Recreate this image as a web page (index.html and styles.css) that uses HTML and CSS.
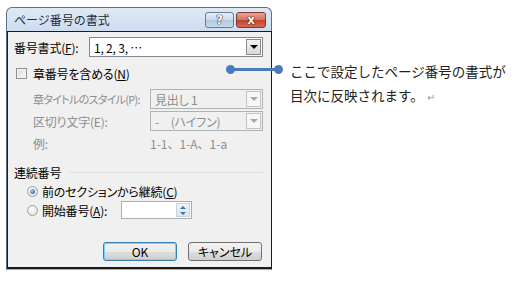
FILE: index.html
```html
<!DOCTYPE html>
<html lang="ja">
<head>
    <meta charset="UTF-8">
    <title>ページ番号の書式</title>
    <link rel="stylesheet" href="styles.css">
</head>
<body>
    <div class="page">
        <div class="dialog">
            <div class="titlebar">
                <span class="title">ページ番号の書式</span>
                <div class="caption-buttons">
                    <span class="cap-btn help">?</span>
                    <span class="cap-btn close">x</span>
                </div>
            </div>
            <div class="dialog-body">
                <div class="row first">
                    <span class="label wide">番号書式(<u>F</u>):</span>
                    <div class="combo">
                        <span class="combo-text">1, 2, 3, …</span>
                        <span class="drop"></span>
                    </div>
                </div>
                <div class="row check-row">
                    <span class="checkbox"></span>
                    <span>章番号を含める(<u>N</u>)</span>
                </div>
                <div class="row indent">
                    <span class="label muted sub squeeze">章タイトルのスタイル(P):</span>
                    <div class="combo disabled">
                        <span class="combo-text">見出し 1</span>
                        <span class="drop"></span>
                    </div>
                </div>
                <div class="row indent tight">
                    <span class="label muted sub">区切り文字(E):</span>
                    <div class="combo disabled">
                        <span class="combo-text">-　(ハイフン)</span>
                        <span class="drop"></span>
                    </div>
                </div>
                <div class="row indent tight">
                    <span class="label muted sub">例:</span>
                    <span class="muted sample">1-1、1-A、1-a</span>
                </div>

                <div class="group-head">
                    <span>連続番号</span>
                    <span class="group-line"></span>
                </div>
                <div class="radio-row">
                    <span class="radio checked"></span>
                    <span>前のセクションから継続(<u>C</u>)</span>
                </div>
                <div class="radio-row">
                    <span class="radio"></span>
                    <span class="start-label">開始番号(<u>A</u>):</span>
                    <div class="spin">
                        <span class="spin-arrows">
                            <span class="arr up"></span>
                            <span class="arr down"></span>
                        </span>
                    </div>
                </div>

                <div class="buttons">
                    <button class="btn default">OK</button>
                    <button class="btn">キャンセル</button>
                </div>
            </div>
        </div>

        <p class="note">ここで設定したページ番号の書式が<br>目次に反映されます。<span class="ret">↵</span></p>

        <!-- callout connector, drawn over the dialog edge -->
        <div class="connector">
            <span class="dot"></span>
            <span class="wire"></span>
            <span class="dot"></span>
        </div>
    </div>
</body>
</html>
```

FILE: styles.css
```css
body {
    margin: 0;
    background: #fff;
    font-family: "Noto Sans CJK JP", "Liberation Sans", sans-serif;
    font-size: 12px;
    color: #000;
}

.page {
    display: flex;
    align-items: flex-start;
    padding: 7px 0 0 6px;
    position: relative;
}

.dialog {
    width: 266px;
    height: 263px;
    box-sizing: border-box;
    display: flex;
    flex-direction: column;
    border: 1px solid #5b6f86;
    border-bottom-color: #7fb4e0;
    border-radius: 6px 6px 0 0;
    background: linear-gradient(#dfe9f5, #c7d8ec 30px, #c3d5eb);
    font-feature-settings: "palt";
    letter-spacing: -0.2px;
    white-space: nowrap;
}

.titlebar {
    height: 23px;
    display: flex;
    justify-content: space-between;
    align-items: center;
    padding: 0 5px 0 7px;
}

.title {
    font-size: 12px;
    color: #1e2a3a;
    font-feature-settings: normal;
    letter-spacing: 0;
}

.caption-buttons {
    display: flex;
    gap: 2px;
    align-self: flex-start;
    margin-top: 4px;
}

.cap-btn {
    height: 14px;
    border: 1px solid #6b7d93;
    border-radius: 3px;
    display: flex;
    align-items: center;
    justify-content: center;
    font-family: "DejaVu Sans", sans-serif;
    font-weight: bold;
    color: #fff;
    text-shadow: 0 0 1px #233, 0 0 1px #233, 0 0 1px #233;
}

.help {
    width: 27px;
    font-size: 12px;
    background: linear-gradient(#e6eef8, #c9d9ec 50%, #b3c8e2 51%, #c7d8ec);
}

.close {
    width: 28px;
    font-size: 12px;
    border-color: #7a3b33;
    background: linear-gradient(#e7a596, #d5705f 50%, #c1412d 51%, #d46a55);
    text-shadow: 0 0 1px #400, 0 0 1px #400, 0 0 1px #400;
}

.dialog-body {
    flex: 1;
    background: #f0f0f0;
    border: 1px solid #1c1c1c;
    border-bottom-width: 2px;
    margin: 0 -1px 0 0;
    padding: 5px 8px 0 6px;
}

.row {
    display: flex;
    align-items: center;
    height: 20px;
}

.check-row {
    margin-top: 6px;
    padding-left: 2px;
    gap: 6px;
}

.indent {
    margin-top: 6px;
    padding-left: 19px;
}

.indent.tight {
    margin-top: 2px;
}

.label.wide {
    width: 75px;
}

.label.sub {
    width: 117px;
    flex-shrink: 0;
}

.label.squeeze {
    font-size: 11px;
    letter-spacing: -0.7px;
}

.muted {
    color: #8d8d8d;
}

.sample {
    font-feature-settings: normal;
    letter-spacing: 0;
}

u {
    text-decoration-thickness: 1px;
    text-underline-offset: 1px;
}

.combo {
    flex: 1;
    height: 20px;
    box-sizing: border-box;
    display: flex;
    align-items: center;
    justify-content: space-between;
    background: #fff;
    border: 1px solid #828790;
    padding: 0 1px 0 4px;
}

.combo .drop {
    width: 15px;
    height: 16px;
    box-sizing: border-box;
    border: 1px solid #8b8b8b;
    background: linear-gradient(#f4f4f4, #d9d9d9);
    position: relative;
}

.combo .drop::after {
    content: "";
    position: absolute;
    left: 3px;
    top: 5px;
    border-left: 4px solid transparent;
    border-right: 4px solid transparent;
    border-top: 4px solid #000;
}

.combo.disabled {
    background: #f0f0f0;
    border-color: #adb2b5;
    color: #8d8d8d;
}

.combo.disabled .drop {
    border-color: #c4c4c4;
    background: #f7f7f7;
}

.combo.disabled .drop::after {
    border-top-color: #a8a8a8;
}

.checkbox {
    width: 11px;
    height: 11px;
    box-sizing: border-box;
    border: 1px solid #8e8f8f;
    background: linear-gradient(135deg, #dcdcdc, #f7f7f7);
    box-shadow: inset 0 0 0 1px #f4f4f4;
}

.group-head {
    display: flex;
    align-items: center;
    height: 20px;
    margin-top: 9px;
    gap: 8px;
}

.group-line {
    flex: 1;
    height: 1px;
    background: #d5dfe5;
}

.radio-row {
    display: flex;
    align-items: center;
    height: 18px;
    padding-left: 13px;
    gap: 4px;
}

.radio-row + .radio-row {
    margin-top: 1px;
}

.radio {
    width: 11px;
    height: 11px;
    box-sizing: border-box;
    border-radius: 50%;
    border: 1px solid #a0a0a0;
    background: radial-gradient(circle at 40% 40%, #fff, #d8d8d8);
    position: relative;
}

.radio.checked::after {
    content: "";
    position: absolute;
    left: 2px;
    top: 2px;
    width: 5px;
    height: 5px;
    border-radius: 50%;
    background: radial-gradient(circle at 35% 35%, #8fd0f5, #1a5f9c);
}

.start-label {
    width: 75px;
}

.spin {
    width: 71px;
    height: 18px;
    box-sizing: border-box;
    background: #fff;
    border: 1px solid #abadb3;
    display: flex;
    justify-content: flex-end;
    padding: 1px;
}

.spin-arrows {
    width: 14px;
    display: flex;
    flex-direction: column;
    align-items: center;
    justify-content: center;
    gap: 3px;
    background: linear-gradient(#eef3f9, #dbe6f1);
    border: 1px solid #c6d3e1;
    box-sizing: border-box;
}

.arr {
    border-left: 3px solid transparent;
    border-right: 3px solid transparent;
}

.arr.up {
    border-bottom: 3px solid #4a6f9c;
}

.arr.down {
    border-top: 3px solid #4a6f9c;
}

.buttons {
    display: flex;
    justify-content: flex-end;
    gap: 11px;
    margin-top: 23px;
    padding-right: 1px;
}

.btn {
    width: 74px;
    height: 19px;
    font-family: inherit;
    font-size: 12px;
    font-feature-settings: "palt";
    padding: 0;
    border: 1px solid #707070;
    border-radius: 3px;
    background: linear-gradient(#f2f2f2, #ebebeb 50%, #dddddd 51%, #cfcfcf);
    color: #000;
}

.btn.default {
    border-color: #3c7fb1;
    box-shadow: inset 0 0 0 1px #6ad6ff;
}

.note {
    margin: 52px 0 0 18px;
    font-size: 13.5px;
    line-height: 24px;
    color: #222;
    white-space: nowrap;
}

.ret {
    font-size: 10px;
    color: #999;
    margin-left: 3px;
}

.connector {
    position: absolute;
    left: 226px;
    top: 65px;
    display: flex;
    align-items: center;
}

.dot {
    width: 9px;
    height: 9px;
    border-radius: 50%;
    background: #4b7bbd;
}

.wire {
    width: 41px;
    height: 3px;
    margin: 0 -1px;
    background: #4b7bbd;
}
```
